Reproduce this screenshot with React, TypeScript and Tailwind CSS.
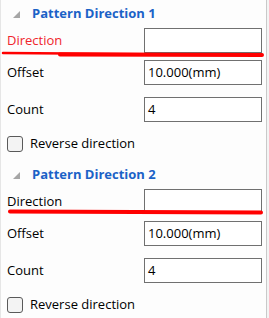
import React from 'react';

const font = { fontFamily: '"Open Sans", "Noto Sans", sans-serif' };

const Arrow: React.FC = () => (
  <svg width="7" height="7" viewBox="0 0 7 7" className="shrink-0">
    <polygon points="7,0 7,7 0,7" fill="#a6a6a6" />
  </svg>
);

const Field: React.FC<{ label: string; value?: string; labelClass?: string }> = ({ label, value, labelClass }) => (
  <div className="flex h-[25px] items-center">
    <div className={`w-[143px] pl-[6px] text-[13px] ${labelClass ?? 'text-black'}`}>{label}</div>
    <div className="flex h-[25px] w-[118px] items-center border border-[#707070] bg-white pl-[3px] text-[13px] text-black">
      {value}
    </div>
  </div>
);

const Section: React.FC<{ n: number; first?: boolean }> = ({ n, first }) => (
  <section className="relative h-[161px]">
    <div className="flex h-[28px] items-center gap-[12px] pl-[12px]">
      <Arrow />
      <span className="text-[13px] font-bold text-[#1b62c7]">Pattern Direction {n}</span>
    </div>
    <Field label="Direction" labelClass={first ? 'text-[#f0242c]' : 'text-black'} />
    <div className="mt-[7px]">
      <Field label="Offset" value="10.000(mm)" />
    </div>
    <div className="mt-[12px]">
      <Field label="Count" value="4" />
    </div>
    <label className="mt-[14px] flex h-[16px] items-center gap-[7px] pl-[6px] text-[13px] text-black">
      <span className="h-[16px] w-[16px] rounded-[3px] border border-[#5a5a5a] bg-[#f3f3f3]" />
      Reverse direction
    </label>
    {first ? (
      <svg className="pointer-events-none absolute left-[-1px] top-[50px]" width="266" height="9" viewBox="0 0 266 9">
        <path d="M3 3 L70 3.5 L262 5" stroke="#ff0000" strokeWidth="2.5" strokeLinecap="round" fill="none" />
        <path d="M60 4.5 L262 5" stroke="#ff0000" strokeWidth="4" strokeLinecap="round" fill="none" />
      </svg>
    ) : (
      <svg className="pointer-events-none absolute left-[-1px] top-[46px]" width="266" height="9" viewBox="0 0 266 9">
        <path d="M10 4.5 L261 5.5" stroke="#ff0000" strokeWidth="4" strokeLinecap="round" fill="none" />
      </svg>
    )}
  </section>
);

export default function App() {
  return (
    <div className="flex h-[318px] w-[269px] overflow-hidden bg-white" style={font}>
      <div className="flex-1 border-l border-r border-l-[#e6e6e6] border-r-[#c9c9c9] bg-[#fdfdfd]">
        <Section n={1} first />
        <Section n={2} />
      </div>
      <div className="w-[2px] bg-[#f4f4f4]" />
    </div>
  );
}
